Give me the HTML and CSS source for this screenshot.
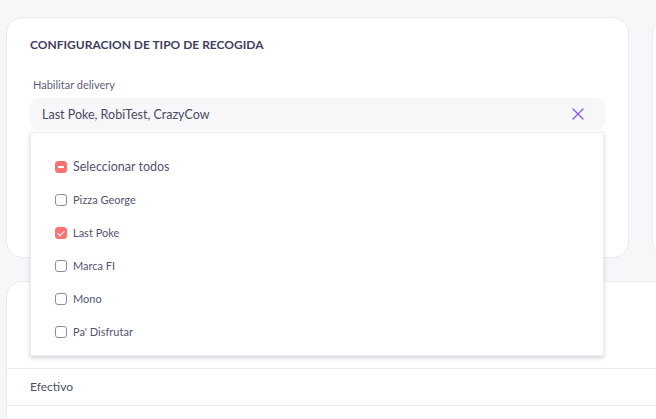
FILE: index.html
```html
<!DOCTYPE html>
<html lang="es">
<head>
    <meta charset="UTF-8">
    <title>Configuracion de tipo de recogida</title>
    <link rel="stylesheet" href="styles.css">
</head>
<body>
    <div class="page">
        <div class="top-row">
            <section class="card pickup-card">
                <h2 class="card-title">CONFIGURACION DE TIPO DE RECOGIDA</h2>
                <label class="field-label">Habilitar delivery</label>
                <div class="select-wrap">
                    <div class="select-box">
                        <span class="select-value">Last Poke, RobiTest, CrazyCow</span>
                        <svg class="clear-icon" width="14" height="14" viewBox="0 0 14 14">
                            <path d="M2 2 L12 12 M12 2 L2 12" stroke="#8b5cf6" stroke-width="1.4" fill="none" stroke-linecap="round"/>
                        </svg>
                    </div>
                    <ul class="dropdown">
                        <li class="option option-all"><span class="check check-partial"></span>Seleccionar todos</li>
                        <li class="option"><span class="check"></span>Pizza George</li>
                        <li class="option"><span class="check check-on"></span>Last Poke</li>
                        <li class="option"><span class="check"></span>Marca FI</li>
                        <li class="option"><span class="check"></span>Mono</li>
                        <li class="option"><span class="check"></span>Pa' Disfrutar</li>
                    </ul>
                </div>
            </section>
            <section class="card side-card"></section>
        </div>

        <section class="card payments-card">
            <div class="payments-head"></div>
            <div class="pay-row">Efectivo</div>
            <div class="pay-row"></div>
        </section>
    </div>
</body>
</html>
```

FILE: styles.css
```css
body {
    margin: 0;
    background-color: #f7f7fa;
    font-family: "Lato", "Open Sans", sans-serif;
    color: #4b4a66;
}
.page {
    padding: 17px 0 0 6px;
    width: 650px;
    height: 402px;
    overflow: hidden;
}
.top-row {
    display: flex;
    gap: 23px;
}
.card {
    background-color: #fff;
    border: 1px solid #ebebf1;
    border-radius: 16px;
    box-sizing: border-box;
}
.pickup-card {
    flex: 0 0 623px;
    height: 241px;
    padding: 19px 23px 0 23px;
}
.side-card {
    flex: 0 0 200px;
    height: 241px;
}
.card-title {
    margin: 0;
    font-size: 12px;
    font-weight: 700;
    color: #3f3e60;
    line-height: 16px;
}
.field-label {
    display: block;
    margin: 25px 0 0 3px;
    font-size: 11px;
    color: #5f5e78;
    line-height: 14px;
}
.select-wrap {
    position: relative;
    margin-top: 6px;
    width: 575px;
}
.select-box {
    height: 32px;
    background-color: #f7f7fa;
    border-radius: 8px;
    display: flex;
    align-items: center;
    justify-content: space-between;
    padding: 0 20px 0 12px;
}
.select-value {
    font-size: 12.5px;
    color: #4a4964;
}
.clear-icon {
    display: block;
}
.dropdown {
    position: absolute;
    top: 34px;
    left: 0;
    width: 574px;
    margin: 0;
    padding: 17px 0 8px 0;
    list-style: none;
    background-color: #fff;
    border: 1px solid #ececf3;
    box-sizing: border-box;
    height: 224px;
    box-shadow: 0 2px 4px rgba(60, 60, 90, 0.22);
    z-index: 5;
}
.option {
    height: 33px;
    display: flex;
    align-items: center;
    padding-left: 24px;
    font-size: 11px;
    color: #55546e;
}
.option-all {
    font-size: 12.5px;
}
.check {
    width: 12px;
    height: 12px;
    border: 1px solid #8f89aa;
    border-radius: 3px;
    box-sizing: border-box;
    margin-right: 6px;
    position: relative;
}
.check-partial,
.check-on {
    background-color: #fa7272;
    border-color: #fa7272;
}
.check-partial::after {
    content: "";
    position: absolute;
    left: 2px;
    top: 4px;
    width: 6px;
    height: 2px;
    background-color: #fff;
}
.check-on::after {
    content: "";
    position: absolute;
    left: 3px;
    top: 1px;
    width: 3px;
    height: 6px;
    border: solid #fff;
    border-width: 0 1px 1px 0;
    transform: rotate(45deg);
}
.payments-card {
    margin-top: 23px;
    width: 700px;
    border-radius: 16px 0 0 0;
    border-right: none;
}
.payments-head {
    height: 86px;
}
.pay-row {
    height: 34px;
    padding-bottom: 2px;
    border-top: 1px solid #e9e9f0;
    padding-left: 23px;
    display: flex;
    align-items: center;
    font-size: 12px;
    color: #4f4e66;
}
```
